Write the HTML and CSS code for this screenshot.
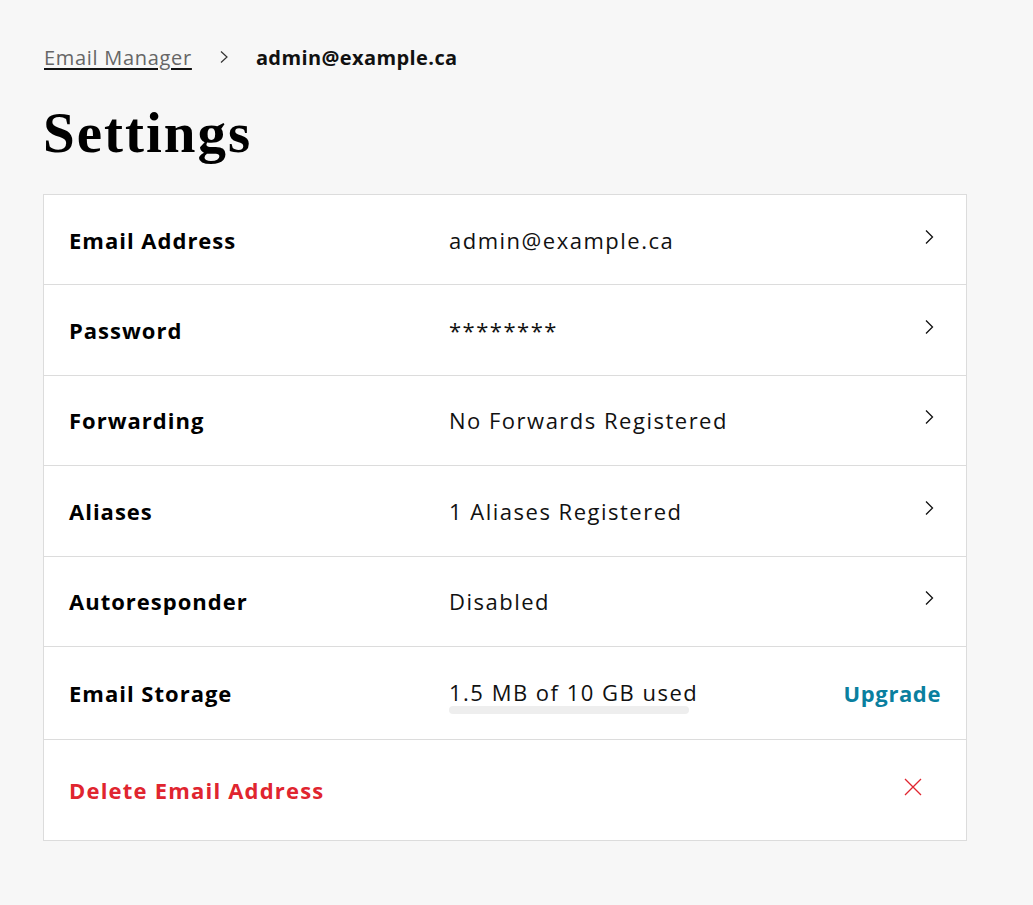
FILE: index.html
```html
<!DOCTYPE html>
<html>
<head>
<meta charset="utf-8">
<link rel="stylesheet" href="styles.css">
</head>
<body>
<main class="page">
  <nav class="crumbs">
    <a class="crumb-link" href="#">Email Manager</a>
    <svg class="crumb-sep" width="10" height="14" viewBox="0 0 10 14"><path d="M2 1.5 L8 7 L2 12.5" fill="none" stroke="#333" stroke-width="1.2"/></svg>
    <span class="crumb-current">admin@example.ca</span>
  </nav>
  <h1 class="title">Settings</h1>
  <section class="card">
    <div class="row">
      <div class="label">Email Address</div>
      <div class="value">admin@example.ca</div>
      <svg class="chev" width="10" height="16" viewBox="0 0 10 16"><path d="M2 1.5 L8.5 8 L2 14.5" fill="none" stroke="#111" stroke-width="1.3"/></svg>
    </div>
    <div class="row">
      <div class="label">Password</div>
      <div class="value">********</div>
      <svg class="chev" width="10" height="16" viewBox="0 0 10 16"><path d="M2 1.5 L8.5 8 L2 14.5" fill="none" stroke="#111" stroke-width="1.3"/></svg>
    </div>
    <div class="row">
      <div class="label">Forwarding</div>
      <div class="value">No Forwards Registered</div>
      <svg class="chev" width="10" height="16" viewBox="0 0 10 16"><path d="M2 1.5 L8.5 8 L2 14.5" fill="none" stroke="#111" stroke-width="1.3"/></svg>
    </div>
    <div class="row">
      <div class="label">Aliases</div>
      <div class="value">1 Aliases Registered</div>
      <svg class="chev" width="10" height="16" viewBox="0 0 10 16"><path d="M2 1.5 L8.5 8 L2 14.5" fill="none" stroke="#111" stroke-width="1.3"/></svg>
    </div>
    <div class="row">
      <div class="label">Autoresponder</div>
      <div class="value">Disabled</div>
      <svg class="chev" width="10" height="16" viewBox="0 0 10 16"><path d="M2 1.5 L8.5 8 L2 14.5" fill="none" stroke="#111" stroke-width="1.3"/></svg>
    </div>
    <div class="row row-storage">
      <div class="label">Email Storage</div>
      <div class="value storage">
        <span>1.5 MB of 10 GB used</span>
        <div class="bar"><div class="bar-fill" style="width:0.015%"></div></div>
      </div>
      <a class="upgrade" href="#">Upgrade</a>
    </div>
    <div class="row row-delete">
      <div class="label delete">Delete Email Address</div>
      <svg class="close" width="18" height="18" viewBox="0 0 18 18"><path d="M1 1 L17 17 M17 1 L1 17" fill="none" stroke="#e0252f" stroke-width="1.3"/></svg>
    </div>
  </section>
</main>
</body>
</html>
```

FILE: styles.css
```css
html, body {
  margin: 0;
  padding: 0;
  background: #f7f7f7;
  color: #111;
  font-family: "Open Sans", "Liberation Sans", sans-serif;
}
.page {
  width: 924px;
  margin-left: 43px;
  padding-top: 42px;
}
.crumbs {
  display: flex;
  align-items: center;
  height: 30px;
}
.crumb-link {
  color: #666;
  font-size: 20px;
  letter-spacing: 0.7px;
  text-decoration: underline;
  text-decoration-color: #111;
  text-underline-offset: 3px;
  margin-left: 1px;
}
.crumb-sep {
  margin-left: 27px;
  margin-right: 27px;
}
.crumb-current {
  font-size: 20px;
  font-weight: 700;
  letter-spacing: 0.4px;
  color: #111;
}
.title {
  font-family: "Liberation Serif", "DejaVu Serif", serif;
  font-weight: 700;
  font-size: 57px;
  line-height: 1;
  margin: 32px 0 33px 0;
  letter-spacing: 2px;
  color: #000;
}
.card {
  background: #fff;
  border: 1px solid #dcdcdc;
}
.row {
  box-sizing: border-box;
  display: flex;
  align-items: center;
  height: 90.4px;
  border-bottom: 1px solid #dcdcdc;
  padding: 0 25px;
}
.label {
  width: 380px;
  font-size: 22px;
  font-weight: 700;
  letter-spacing: 1px;
  color: #000;
}
.value {
  flex: 1;
  font-size: 22px;
  color: #111;
  letter-spacing: 1.5px;
}
.chev {
  margin-right: 7px;
  margin-bottom: 6px;
}
.row-storage {
  height: 92.6px;
}
.storage {
  display: flex;
  flex-direction: column;
  padding-top: 5px;
}
.bar {
  width: 240px;
  height: 8px;
  border-radius: 4px;
  background: #eeeeee;
  margin-top: -1px;
  overflow: hidden;
}
.bar-fill {
  height: 100%;
  background: #0a7f9f;
}
.upgrade {
  color: #0a7f9f;
  font-weight: 700;
  font-size: 22px;
  letter-spacing: 0.6px;
  text-decoration: none;
}
.row-delete {
  height: 100px;
  border-bottom: none;
}
.delete {
  flex: 1;
  color: #e0252f;
  width: auto;
  letter-spacing: 1.2px;
}
.close {
  margin-right: 19px;
  margin-bottom: 6px;
}
```
